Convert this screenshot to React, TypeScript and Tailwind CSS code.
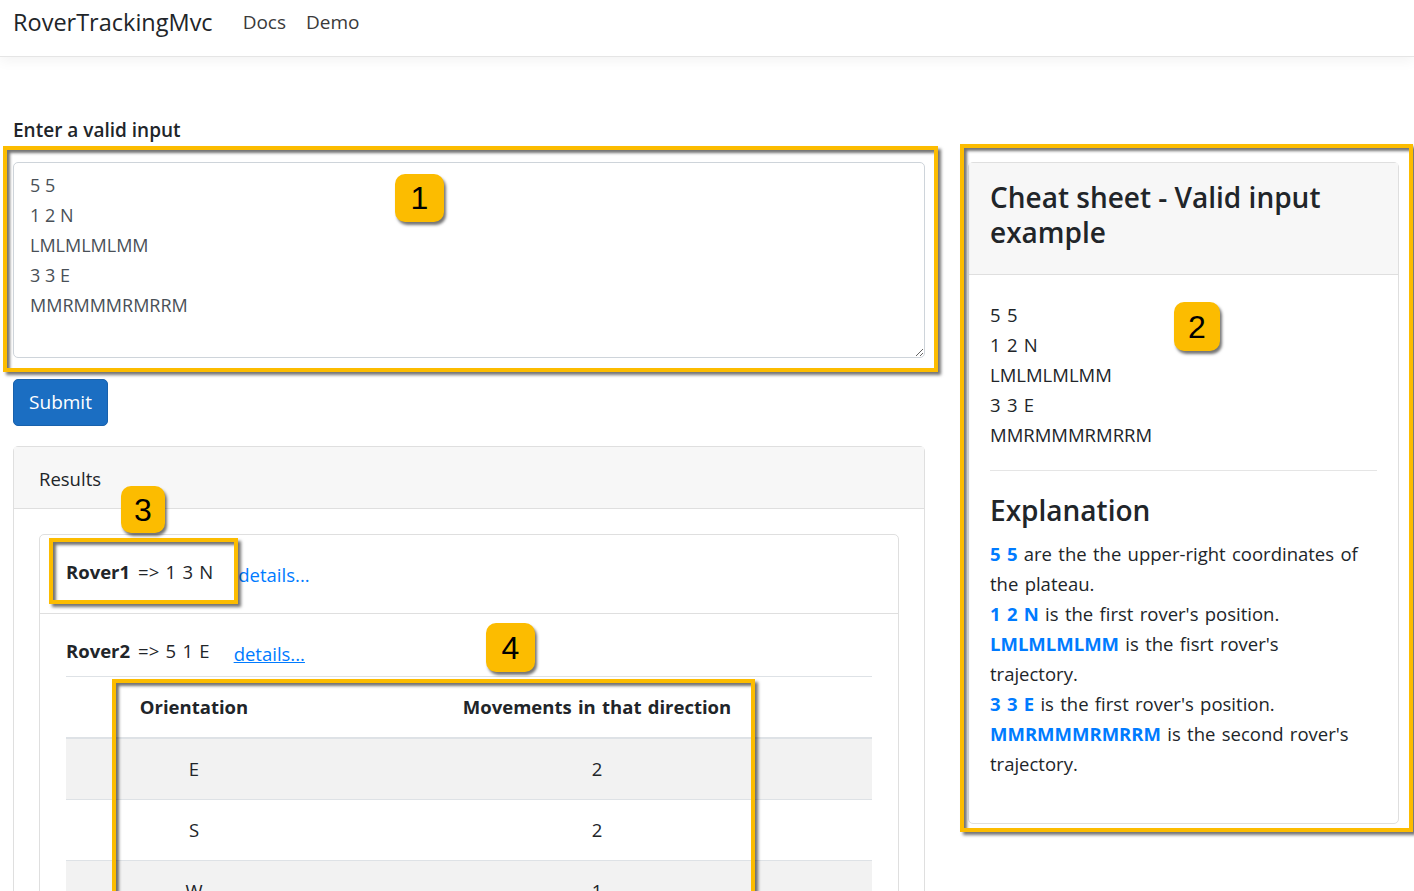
import React from 'react';

const sample = '5 5\n1 2 N\nLMLMLMLMM\n3 3 E\nMMRMMMRMRRM';

function Frame({ className }: { className: string }) {
  return (
    <div
      className={`pointer-events-none absolute border-[4px] border-[#fcbc00] shadow-[3px_3px_3px_rgba(0,0,0,0.55),inset_3px_3px_3px_rgba(0,0,0,0.55)] ${className}`}
    />
  );
}

function Marker({ n, className }: { n: number; className: string }) {
  return (
    <div
      className={`pointer-events-none absolute flex items-center justify-center rounded-[10px] bg-[#fcbc00] font-['Liberation_Sans',Arial,sans-serif] text-[32px] leading-none text-black shadow-[2px_3px_3px_rgba(0,0,0,0.55)] ${className}`}
    >
      {n}
    </div>
  );
}

const rows = [
  { dir: 'E', moves: 2 },
  { dir: 'S', moves: 2 },
  { dir: 'W', moves: 1 },
  { dir: 'N', moves: 1 },
];

export default function App() {
  return (
    <div className="relative min-h-screen bg-white font-['Open_Sans','Noto_Sans',sans-serif] text-[#212529]">
      <nav className="flex h-[57px] items-start border-b border-[#e5e5e5] bg-white pl-[13px] pt-[5px] shadow-[0_4px_12px_rgba(0,0,0,0.05)]">
        <span className="text-[23.5px] leading-[34px]">RoverTrackingMvc</span>
        <a className="ml-[30px] text-[19px] leading-[34px] text-[#3a3a3a]">Docs</a>
        <a className="ml-[20px] text-[19px] leading-[34px] text-[#3a3a3a]">Demo</a>
      </nav>

      <main className="flex gap-[43px] pl-[13px] pt-[58px] [word-spacing:1.5px]">
        {/* input + results */}
        <div className="w-[912px]">
          <label className="block text-[19px] font-semibold leading-[30px] [word-spacing:0px]">Enter a valid input</label>
          <textarea
            className="mt-[17px] block h-[196px] w-full resize-y rounded-[5px] border border-[#ced4da] bg-white px-[16px] pt-[7px] text-[18px] leading-[30px] text-[#495057] outline-none"
            defaultValue={sample}
          />
          <button className="mt-[21px] h-[47px] w-[95px] rounded-[5px] border border-[#1861ac] bg-[#1b6ec2] text-[19px] text-white">
            Submit
          </button>

          <div className="mt-[20px] rounded-[5px] border border-[#dfdfdf]">
            <div className="flex h-[62px] items-center border-b border-[#dfdfdf] bg-[#f7f7f7] px-[25px] pt-[2px] text-[18.5px]">
              Results
            </div>
            <div className="p-[25px]">
              <div className="rounded-[5px] border border-[#dfdfdf] text-[18.5px] leading-[30px]">
                <div className="flex items-baseline border-b border-[#dfdfdf] px-[26px] pb-[26px] pt-[22px]">
                  <strong className="font-bold">Rover1</strong>
                  <span className="ml-[8px]">=&gt; 1 3 N</span>
                  <a className="ml-[25px] translate-y-[3px] text-[#007bff]">details...</a>
                </div>
                <div className="px-[26px] pt-[22px]">
                  <div className="flex items-baseline">
                    <strong className="font-bold">Rover2</strong>
                    <span className="ml-[8px]">=&gt; 5 1 E</span>
                    <a className="ml-[24px] translate-y-[3px] text-[#007bff] underline">details...</a>
                  </div>
                  <table className="mt-[10px] w-full border-collapse text-center">
                    <thead>
                      <tr>
                        <th className="w-[256px] border-b-2 border-t border-[#dee2e6] py-[15px] font-bold">Orientation</th>
                        <th className="border-b-2 border-t border-[#dee2e6] py-[15px] font-bold">Movements in that direction</th>
                      </tr>
                    </thead>
                    <tbody>
                      {rows.map((r, i) => (
                        <tr key={r.dir} className={i % 2 === 0 ? 'bg-[#f2f2f2]' : ''}>
                          <td className="border-t border-[#dee2e6] py-[15px]">{r.dir}</td>
                          <td className="border-t border-[#dee2e6] py-[15px]">{r.moves}</td>
                        </tr>
                      ))}
                    </tbody>
                  </table>
                </div>
              </div>
            </div>
          </div>
        </div>

        {/* cheat sheet */}
        <div className="mt-[47px] w-[431px] self-start rounded-[5px] border border-[#dfdfdf]">
          <div className="border-b border-[#dfdfdf] bg-[#f7f7f7] px-[21px] pb-[24px] pt-[17px]">
            <h3 className="text-[28px] font-semibold leading-[35px] [word-spacing:0px]">Cheat sheet - Valid input example</h3>
          </div>
          <div className="px-[21px] pb-[44px] pt-[25px] text-[18.5px] leading-[30px]">
            <div>5 5</div>
            <div>1 2 N</div>
            <div>LMLMLMLMM</div>
            <div>3 3 E</div>
            <div>MMRMMMRMRRM</div>
            <hr className="mt-[20px] border-[#e5e5e5]" />
            <h3 className="mb-[11px] mt-[21px] text-[28px] font-semibold leading-[36px]">Explanation</h3>
            <div>
              <strong className="font-bold text-[#007bff]">5 5</strong> are the the upper-right coordinates of
            </div>
            <div>the plateau.</div>
            <div>
              <strong className="font-bold text-[#007bff]">1 2 N</strong> is the first rover's position.
            </div>
            <div>
              <strong className="font-bold text-[#007bff]">LMLMLMLMM</strong> is the fisrt rover's
            </div>
            <div>trajectory.</div>
            <div>
              <strong className="font-bold text-[#007bff]">3 3 E</strong> is the first rover's position.
            </div>
            <div>
              <strong className="font-bold text-[#007bff]">MMRMMMRMRRM</strong> is the second rover's
            </div>
            <div>trajectory.</div>
          </div>
        </div>
      </main>

      {/* annotation overlays */}
      <Frame className="left-[3px] top-[146px] h-[226px] w-[935px]" />
      <Frame className="left-[960px] top-[144px] h-[688px] w-[453px]" />
      <Frame className="left-[49px] top-[538px] h-[66px] w-[189px]" />
      <Frame className="left-[112px] top-[679px] h-[260px] w-[643px]" />
      <Marker n={1} className="left-[395px] top-[174px] h-[48px] w-[49px]" />
      <Marker n={2} className="left-[1174px] top-[302px] h-[49px] w-[46px]" />
      <Marker n={3} className="left-[121px] top-[486px] h-[47px] w-[44px]" />
      <Marker n={4} className="left-[486px] top-[623px] h-[49px] w-[49px]" />
    </div>
  );
}
